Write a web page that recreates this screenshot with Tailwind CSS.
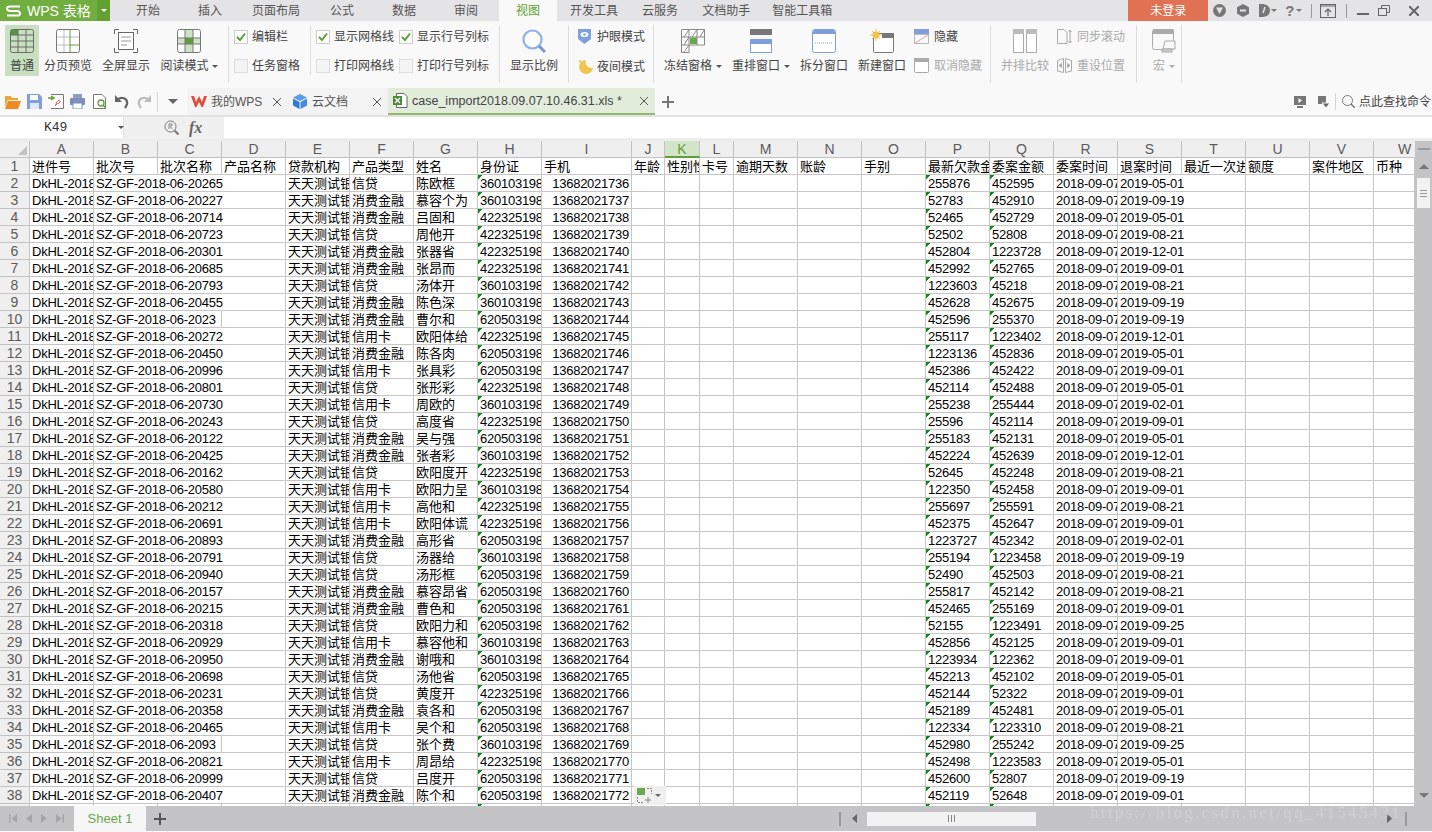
<!DOCTYPE html>
<html lang="zh-CN">
<head>
  <meta charset="UTF-8">
  <title>WPS 表格 - case_import2018.09.07.10.46.31.xls</title>
  <script src="https://cdn.jsdelivr.net/npm/@tailwindcss/browser@4"></script>
</head>
<body class="relative w-[1432px] h-[832px] overflow-hidden bg-[#f9f9f9] text-[12px] leading-[14px] text-[#444] [font-family:'Liberation_Sans','Noto_Sans_CJK_SC',sans-serif]">

  <!-- Title bar -->
  <header class="flex h-[21px] bg-[#e4e4e6]">
    <div class="flex items-center w-[97px] bg-[#72ad3f] text-white">
      <svg class="ml-[6px] w-[15px] h-[12px]" viewBox="0 0 15 12" fill="none" stroke="#fff" stroke-width="2"><path d="M14 1.500H4Q1 1.500 1 3.500T4 6H11Q14 6 14 8.500T11 10.500H1"/></svg>
      <span class="ml-[6px] text-[14px]">WPS 表格</span>
    </div>
    <div class="flex items-center justify-center w-[13px] bg-[#62a032]">
      <div class="w-0 h-0 border-x-[3px] border-x-transparent border-t-[3px] border-t-white"></div>
    </div>
    <nav class="flex items-center text-[#555]">
      <span class="ml-[26px]">开始</span>
      <span class="ml-[38px]">插入</span>
      <span class="ml-[30px]">页面布局</span>
      <span class="ml-[30px]">公式</span>
      <span class="ml-[38px]">数据</span>
      <span class="ml-[38px]">审阅</span>
      <span class="ml-[21px] flex items-center justify-center w-[58px] h-[21px] bg-[#f9f9f9] text-[#5d9e32]">视图</span>
      <span class="ml-[13px]">开发工具</span>
      <span class="ml-[24px]">云服务</span>
      <span class="ml-[24px]">文档助手</span>
      <span class="ml-[22px]">智能工具箱</span>
    </nav>
    <div class="flex items-center justify-center ml-[296px] w-[80px] bg-[#e07152] text-white">未登录</div>
    <div class="flex items-center flex-1 text-[#777]">
      <svg class="ml-[5px] w-[13px] h-[13px]" viewBox="0 0 13 13"><circle cx="6.500" cy="6.500" r="6.500" fill="#777"/><path d="M3 3.500H10L6.500 10Z" fill="#e4e4e6"/></svg>
      <svg class="ml-[11px] w-[12px] h-[13px]" viewBox="0 0 12 13"><path d="M6 0L12 3.200V9.800L6 13L0 9.800V3.200Z" fill="#777"/><path d="M3 6.500H9" stroke="#e4e4e6" stroke-width="2"/></svg>
      <svg class="ml-[10px] w-[11px] h-[13px]" viewBox="0 0 11 13"><path d="M0 0H4Q11 1 11 6.500T4 13H0Z" fill="#777"/><path d="M6 3L4 9" stroke="#e4e4e6" stroke-width="1.500"/></svg>
      <div class="ml-[1px] w-0 h-0 border-x-[3px] border-x-transparent border-t-[3px] border-t-[#777]"></div>
      <span class="ml-[8px] text-[15px] font-bold">?</span>
      <div class="ml-[2px] w-0 h-0 border-x-[3px] border-x-transparent border-t-[3px] border-t-[#777]"></div>
      <div class="ml-[9px] w-px h-[14px] bg-[#9a9a9a]"></div>
      <svg class="ml-[8px] w-[16px] h-[14px]" viewBox="0 0 16 14" fill="none" stroke="#666"><rect x=".5" y=".5" width="15" height="13"/><path d="M0 2H16M8 12V5M5 8L8 5L11 8" stroke-width="1.200"/></svg>
      <div class="ml-[10px] w-px h-[14px] bg-[#9a9a9a]"></div>
      <div class="ml-[10px] w-[12px] h-[2px] bg-[#666] mt-[6px]"></div>
      <svg class="ml-[9px] w-[12px] h-[11px]" viewBox="0 0 12 11" fill="none" stroke="#666"><rect x=".5" y="3.500" width="8" height="7"/><path d="M3.500 3V.5H11.500V7.500H9"/></svg>
      <svg class="ml-[19px] w-[10px] h-[10px]" viewBox="0 0 10 10" fill="none" stroke="#666" stroke-width="2"><path d="M0 0L10 10M10 0L0 10"/></svg>
    </div>
  </header>

  <!-- Ribbon -->
  <section class="flex items-start h-[67px] pl-[5px] pt-[4px]">
    <div class="flex flex-col items-center w-[34px] h-[51px] pt-[4px] bg-[#c8e0bf]">
      <svg class="w-6 h-6" viewBox="0 0 24 24" fill="none" stroke="#6b6b6b"><rect x=".5" y=".5" width="23" height="23" rx="2" fill="#c8e0bf"/><rect x="1" y="1" width="7" height="5" fill="#4f9a3e" stroke="none"/><path d="M8 1V23M16 1V23M1 6H23M1 12H23M1 18H23"/></svg>
      <span class="mt-[6px]">普通</span>
    </div>
    <div class="flex flex-col items-center ml-[5px] w-[48px] pt-[4px]">
      <svg class="w-6 h-6" viewBox="0 0 24 24" fill="none" stroke="#bbb"><rect x=".5" y=".5" width="23" height="23" rx="2" fill="#fff" stroke="#777"/><path d="M8 1V23M1 8H23M1 16H14"/><path d="M14 1V23M14 16H23" stroke="#5f9f3a"/></svg>
      <span class="mt-[6px]">分页预览</span>
    </div>
    <div class="flex flex-col items-center ml-[10px] w-[48px] pt-[4px]">
      <svg class="w-6 h-6" viewBox="0 0 24 24" fill="none" stroke="#666"><path d="M.5 5V.5H5M19 .5H23.500V5M.5 19V23.500H5M19 23.500H23.500V19"/><rect x="4.500" y="3.500" width="15" height="17" fill="#fff"/><path d="M7 8H17M7 12H17M7 16H13" stroke="#999"/></svg>
      <span class="mt-[6px]">全屏显示</span>
    </div>
    <div class="flex flex-col items-center ml-[10px] w-[58px] pt-[4px]">
      <svg class="w-6 h-6" viewBox="0 0 24 24" fill="none" stroke="#777"><rect x=".5" y=".5" width="23" height="23" rx="2" fill="#fff"/><rect x="1" y="9" width="22" height="6" fill="#cfe2c6" stroke="none"/><rect x="8" y="1" width="8" height="22" fill="#cfe2c6" stroke="none"/><rect x="8" y="9" width="8" height="6" fill="#5f9f3a" stroke="none"/><path d="M8 1V23M16 1V23M1 9H23M1 15H23"/></svg>
      <div class="flex items-center mt-[6px]">阅读模式<i class="ml-[3px] w-0 h-0 border-x-[3px] border-x-transparent border-t-[3px] border-t-[#555]"></i></div>
    </div>
    <div class="ml-[10px] w-px h-[58px] bg-[#dcdcdc]"></div>

    <div class="flex flex-col gap-[15px] ml-[5px] pt-[5px] w-[76px]">
      <label class="flex items-center h-[14px]"><span class="flex items-center justify-center w-[14px] h-[14px] border border-[#ccc] bg-white"><svg class="w-[10px] h-[10px]" viewBox="0 0 10 10" fill="none" stroke="#5f9f3a" stroke-width="2"><path d="M1 5L4 8L9 1.500"/></svg></span><span class="ml-[4px]">编辑栏</span></label>
      <label class="flex items-center h-[14px]"><span class="w-[14px] h-[14px] border border-[#ddd] bg-[#f4f4f4]"></span><span class="ml-[4px]">任务窗格</span></label>
    </div>
    <div class="w-px h-[50px] bg-[#dcdcdc]"></div>

    <div class="grid grid-cols-[83px_90px] gap-y-[15px] ml-[5px] pt-[5px] w-[183px]">
      <label class="flex items-center h-[14px]"><span class="flex items-center justify-center w-[14px] h-[14px] border border-[#ccc] bg-white"><svg class="w-[10px] h-[10px]" viewBox="0 0 10 10" fill="none" stroke="#5f9f3a" stroke-width="2"><path d="M1 5L4 8L9 1.500"/></svg></span><span class="ml-[4px]">显示网格线</span></label>
      <label class="flex items-center h-[14px]"><span class="flex items-center justify-center w-[14px] h-[14px] border border-[#ccc] bg-white"><svg class="w-[10px] h-[10px]" viewBox="0 0 10 10" fill="none" stroke="#5f9f3a" stroke-width="2"><path d="M1 5L4 8L9 1.500"/></svg></span><span class="ml-[4px]">显示行号列标</span></label>
      <label class="flex items-center h-[14px]"><span class="w-[14px] h-[14px] border border-[#ddd] bg-[#f4f4f4]"></span><span class="ml-[4px]">打印网格线</span></label>
      <label class="flex items-center h-[14px]"><span class="w-[14px] h-[14px] border border-[#ddd] bg-[#f4f4f4]"></span><span class="ml-[4px]">打印行号列标</span></label>
    </div>
    <div class="w-px h-[58px] bg-[#dcdcdc]"></div>

    <div class="flex flex-col items-center ml-[10px] w-[48px] pt-[4px]">
      <svg class="w-6 h-6" viewBox="0 0 24 24" fill="none"><circle cx="10.500" cy="10.500" r="9" stroke="#8fb0ec" stroke-width="2.200" fill="#fff"/><path d="M17 17L23 23" stroke="#7f97c6" stroke-width="3"/></svg>
      <span class="mt-[6px]">显示比例</span>
    </div>
    <div class="ml-[10px] w-px h-[58px] bg-[#dcdcdc]"></div>

    <div class="flex flex-col gap-[15px] ml-[9px] pt-[4px] w-[75px]">
      <div class="flex items-center h-[15px]"><svg class="w-[13px] h-[15px]" viewBox="0 0 13 15"><path d="M0 0H13V10L6.500 15L0 10Z" fill="#7e9fdc"/><ellipse cx="6.500" cy="5.500" rx="4" ry="2.500" fill="#fff"/><circle cx="6.500" cy="5.500" r="1.300" fill="#7e9fdc"/></svg><span class="ml-[6px]">护眼模式</span></div>
      <div class="flex items-center h-[15px]"><svg class="w-[15px] h-[15px]" viewBox="0 0 15 15"><path d="M8 1A7 7 0 1 0 15 9A6 6 0 0 1 8 1Z" fill="#f3c34f"/><path d="M2 1V4M.5 2.500H3.500" stroke="#f3c34f"/></svg><span class="ml-[4px]">夜间模式</span></div>
    </div>
    <div class="w-px h-[58px] bg-[#dcdcdc]"></div>

    <div class="flex flex-col items-center ml-[10px] w-[58px] pt-[4px]">
      <svg class="w-6 h-6" viewBox="0 0 24 24" fill="none" stroke="#888"><path d="M.5 23.500V.5H23.500V16H8V23.500Z" fill="#fff"/><path d="M.5 8H23.500M8 .5V16M16 .5V16M.5 16H8M3 8L8 .5M11 8L16 .5M19 8L23.500 .5M3 16L8 8M3 23L8 16"/><rect x="9" y="8.500" width="7" height="6.500" fill="#6ba84e" stroke="none"/></svg>
      <div class="flex items-center mt-[6px]">冻结窗格<i class="ml-[4px] w-0 h-0 border-x-[3px] border-x-transparent border-t-[3px] border-t-[#555]"></i></div>
    </div>
    <div class="flex flex-col items-center ml-[10px] w-[58px] pt-[4px]">
      <svg class="w-6 h-6" viewBox="0 0 24 24"><rect x="1" y="0" width="22" height="6" fill="#777"/><rect x="1" y="6" width="22" height="3" fill="#f9f9f9"/><rect x="1.500" y="10.500" width="21" height="13" fill="#fff" stroke="#7e9fdc"/><rect x="1" y="10" width="22" height="5" fill="#7e9fdc"/></svg>
      <div class="flex items-center mt-[6px]">重排窗口<i class="ml-[4px] w-0 h-0 border-x-[3px] border-x-transparent border-t-[3px] border-t-[#555]"></i></div>
    </div>
    <div class="flex flex-col items-center ml-[10px] w-[48px] pt-[4px]">
      <svg class="w-6 h-6" viewBox="0 0 24 24"><rect x=".5" y=".5" width="23" height="23" rx="2" fill="#fff" stroke="#7e9fdc"/><path d="M1 3Q1 1 3 1H21Q23 1 23 3V5H1Z" fill="#7e9fdc"/><path d="M3 14H21" stroke="#7e9fdc" stroke-dasharray="1 1"/></svg>
      <span class="mt-[6px]">拆分窗口</span>
    </div>
    <div class="flex flex-col items-center ml-[10px] w-[48px] pt-[4px]">
      <svg class="w-6 h-6" viewBox="0 0 24 24"><rect x="3.500" y="4.500" width="20" height="19" rx="1" fill="#fff" stroke="#777"/><rect x="12" y="4" width="12" height="5" fill="#777"/><circle cx="6" cy="6" r="3.500" fill="#f3c34f"/><path d="M6 0V12M0 6H12M2 2L10 10M10 2L2 10" stroke="#f3c34f"/></svg>
      <span class="mt-[6px]">新建窗口</span>
    </div>
    <div class="flex flex-col gap-[14px] ml-[8px] pt-[4px] w-[76px]">
      <div class="flex items-center h-[15px]"><svg class="w-[15px] h-[15px]" viewBox="0 0 15 15" fill="none"><rect width="15" height="5" fill="#7e9fdc"/><rect x=".5" y="5.500" width="14" height="9" stroke="#777" stroke-dasharray="1 1"/><path d="M1 14L14 6" stroke="#ee9aa8"/></svg><span class="ml-[5px]">隐藏</span></div>
      <div class="flex items-center h-[15px] text-[#aaa]"><svg class="w-[15px] h-[15px]" viewBox="0 0 15 15"><rect x=".5" y=".5" width="14" height="14" rx="1" fill="#fff" stroke="#aaa"/><rect width="15" height="4" fill="#aaa"/></svg><span class="ml-[5px]">取消隐藏</span></div>
    </div>
    <div class="w-px h-[58px] bg-[#dcdcdc]"></div>

    <div class="flex flex-col items-center ml-[10px] w-[48px] pt-[4px] text-[#aaa]">
      <svg class="w-6 h-6" viewBox="0 0 24 24" fill="#fff" stroke="#aaa"><rect x=".5" y=".5" width="10" height="23"/><rect x="13.500" y=".5" width="10" height="23"/><path d="M0 0H11V5H0ZM13 0H24V5H13Z" fill="#bbb" stroke="none"/></svg>
      <span class="mt-[6px]">并排比较</span>
    </div>
    <div class="flex flex-col gap-[14px] ml-[8px] pt-[4px] w-[79px] text-[#aaa]">
      <div class="flex items-center h-[15px]"><svg class="w-[15px] h-[15px]" viewBox="0 0 15 15" fill="none" stroke="#aaa"><path d="M.5 .5H7L10 3.500V14.500H.5Z"/><path d="M13 1V14M11.500 3L13 1L14.500 3M11.500 12L13 14L14.500 12"/></svg><span class="ml-[5px]">同步滚动</span></div>
      <div class="flex items-center h-[15px]"><svg class="w-[15px] h-[15px]" viewBox="0 0 15 15" fill="none" stroke="#aaa"><path d="M.5 2.500L6.500 .5V14.500L.5 13ZM14.500 2.500L8.500 .5V14.500L14.500 13Z"/><path d="M2 7.500L4.500 5.500V9.500ZM13 7.500L10.500 5.500V9.500Z" fill="#aaa"/></svg><span class="ml-[5px]">重设位置</span></div>
    </div>
    <div class="w-px h-[58px] bg-[#dcdcdc]"></div>

    <div class="flex flex-col items-center ml-[10px] w-[34px] pt-[4px] text-[#aaa]">
      <svg class="w-6 h-6" viewBox="0 0 24 24" fill="#f9f9f9" stroke="#aaa"><rect x=".5" y=".5" width="21" height="20" rx="2"/><path d="M1 2Q1 0 3 0H20Q22 0 22 2V5H1Z" fill="#aaa" stroke="none"/><path d="M13 12H23V20H11Z"/><path d="M10 23H20V20H10Z" fill="#ccc"/></svg>
      <div class="flex items-center mt-[6px]">宏<i class="ml-[4px] w-0 h-0 border-x-[3px] border-x-transparent border-t-[3px] border-t-[#aaa]"></i></div>
    </div>
    <div class="w-px h-[58px] bg-[#dcdcdc]"></div>
  </section>

  <!-- Quick access + document tabs -->
  <section class="flex items-stretch h-[27px]">
    <div class="flex items-center w-[187px] pl-[5px]">
      <svg class="w-[16px] h-[14px]" viewBox="0 0 16 14"><path d="M0 1H6L7 3H13V5H3L0 12Z" fill="#f0a23c"/><path d="M3 6H16L13 14H0Z" fill="#f08a1e"/></svg>
      <svg class="ml-[6px] w-[15px] h-[15px]" viewBox="0 0 15 15"><path d="M0 0H12L15 3V15H0Z" fill="#7e9fdc"/><rect x="3" y="1" width="8" height="5" fill="#fff"/><rect x="3" y="9" width="9" height="6" fill="#dfe8f8"/></svg>
      <svg class="ml-[6px] w-[16px] h-[15px]" viewBox="0 0 16 15" fill="none"><path d="M3 .5H15.500V14.500H3" stroke="#777" fill="#fff"/><path d="M0 4H5M3 2L6 4L3 6" stroke="#5f9f3a" stroke-width="1.500"/><path d="M8 11C8 6 13 5 12 8C11 10 8 9 7 12" stroke="#d9534f"/></svg>
      <svg class="ml-[6px] w-[15px] h-[15px]" viewBox="0 0 15 15"><rect x="3" y="0" width="9" height="4" fill="#8f9fc4"/><rect x="0" y="4" width="15" height="7" rx="1" fill="#7e8fb8"/><rect x="3" y="9" width="9" height="6" fill="#fff" stroke="#7e8fb8"/></svg>
      <svg class="ml-[8px] w-[14px] h-[15px]" viewBox="0 0 14 15" fill="none"><path d="M.5 .5H9L12.500 4V14.500H.5Z" stroke="#777" fill="#fff"/><circle cx="8" cy="9" r="3" stroke="#5f9f3a" stroke-width="1.300"/><path d="M10 11L13 14" stroke="#5f9f3a" stroke-width="1.500"/></svg>
      <svg class="ml-[8px] w-[14px] h-[14px]" viewBox="0 0 14 14" fill="none"><path d="M2 5C6 1 13 3 12 9Q11.500 11 10 13" stroke="#666" stroke-width="2.300"/><path d="M0 0V7H7Z" fill="#666"/></svg>
      <svg class="ml-[8px] w-[14px] h-[14px]" viewBox="0 0 14 14" fill="none"><path d="M12 5C8 1 1 3 2 9Q2.500 11 4 13" stroke="#bbb" stroke-width="2.300"/><path d="M14 0V7H7Z" fill="#bbb"/></svg>
      <div class="ml-[6px] w-px h-[20px] bg-[#d5d5d5]"></div>
      <div class="ml-[10px] w-0 h-0 border-x-[5px] border-x-transparent border-t-[5px] border-t-[#666]"></div>
    </div>
    <div class="flex items-center w-[100px] bg-[#f3f3f3] text-[#555]">
      <svg class="ml-[4px] w-[16px] h-[11px]" viewBox="0 0 16 11"><path d="M0 0H3L5 6L8 0L11 6L13 0H16L12 11H10.500L8 6L5.500 11H4Z" fill="#e24b3b"/></svg>
      <span class="ml-[4px] w-[62px]">我的WPS</span>
      <svg class="w-[8px] h-[8px]" viewBox="0 0 8 8" stroke="#555"><path d="M0 0L8 8M8 0L0 8"/></svg>
    </div>
    <div class="flex items-center w-[101px] bg-[#f3f3f3] text-[#555]">
      <svg class="ml-[6px] w-[14px] h-[15px]" viewBox="0 0 14 15"><path d="M7 0L14 3.500L7 7L0 3.500Z" fill="#5a9be6"/><path d="M0 4.500L6.500 8V15L0 11.500Z" fill="#2f7bd8"/><path d="M14 4.500L7.500 8V15L14 11.500Z" fill="#3f8be0"/></svg>
      <span class="ml-[5px] w-[61px]">云文档</span>
      <svg class="w-[8px] h-[8px]" viewBox="0 0 8 8" stroke="#555"><path d="M0 0L8 8M8 0L0 8"/></svg>
    </div>
    <div class="flex items-center w-[267px] bg-[#e2ecdb] border-b-[2px] border-b-[#8fbc6f] text-[#444] text-[12.5px]">
      <svg class="ml-[5px] w-[15px] h-[15px]" viewBox="0 0 15 15" fill="none"><path d="M3.500 .5H11L14 3.500V14.500H3.500Z" stroke="#666" fill="#fff"/><rect x="0" y="3" width="9" height="9" fill="#4c8a3a"/><path d="M2 5L7 10M7 5L2 10" stroke="#fff" stroke-width="1.300"/></svg>
      <span class="ml-[4px] w-[228px]">case_import2018.09.07.10.46.31.xls *</span>
      <svg class="w-[8px] h-[8px]" viewBox="0 0 8 8" stroke="#555"><path d="M0 0L8 8M8 0L0 8"/></svg>
    </div>
    <svg class="ml-[7px] self-center w-[12px] h-[12px]" viewBox="0 0 12 12" stroke="#777" stroke-width="2"><path d="M6 0V12M0 6H12"/></svg>
    <div class="flex items-center ml-auto">
      <svg class="w-[12px] h-[12px]" viewBox="0 0 12 12"><rect y="0" width="12" height="9" fill="#777"/><path d="M4.500 2V7L8 4.500Z" fill="#fff"/><rect x="3" y="10" width="6" height="2" fill="#777"/></svg>
      <svg class="ml-[12px] w-[12px] h-[12px]" viewBox="0 0 12 12"><rect width="8" height="8" fill="#777"/><path d="M4 7H12L8 12Z" fill="#666" stroke="#f9f9f9"/></svg>
      <div class="ml-[5px] w-px h-[17px] bg-[#d5d5d5]"></div>
      <svg class="ml-[6px] w-[13px] h-[13px]" viewBox="0 0 13 13" fill="none" stroke="#777"><circle cx="5.500" cy="5.500" r="5"/><path d="M9 9L13 13" stroke-width="1.500"/></svg>
      <span class="ml-[4px] w-[73px] whitespace-nowrap overflow-hidden">点此查找命令</span>
    </div>
  </section>

  <div class="h-[2px] bg-[#e2e2e2]"></div>

  <!-- Formula bar -->
  <section class="flex h-[22px] pb-px bg-[#f0f0f0]">
    <div class="flex items-center w-[124px] bg-white border-r border-[#e2e2e2] [font-family:'Liberation_Mono',monospace] text-[13px] text-[#333]">
      <span class="ml-[44px]">K49</span>
      <i class="ml-[51px] w-0 h-0 border-x-[3px] border-x-transparent border-t-[3px] border-t-[#555]"></i>
    </div>
    <div class="flex items-center w-[100px] text-[#666]">
      <svg class="ml-[40px] w-[15px] h-[15px]" viewBox="0 0 15 15" fill="none" stroke="#777"><circle cx="6.500" cy="6.500" r="5.500"/><path d="M10.500 10.500L14.500 14.500" stroke-width="2"/><path d="M5 9V4H8Q9 6 6 6.500L8.500 9" stroke-width=".9"/></svg>
      <span class="ml-[10px] [font-family:'Liberation_Serif',serif] italic font-bold text-[16px]">fx</span>
    </div>
    <div class="flex-1 bg-white"></div>
  </section>

  <!-- Sheet -->
  <main class="flex h-[667px] pt-[2px] bg-[#ececec]">
    <div id="sheet" class="grid grid-cols-[30px_repeat(8,64px)_90px_33px_35px_34px_repeat(10,64px)_41px] auto-rows-[17px] w-[1415px] h-[665px] overflow-hidden bg-white"></div>
    <aside class="flex flex-col items-center w-[17px] h-[665px] bg-[#c4c4c6]">
      <div class="mt-[7px] w-[12px] h-[2px] bg-[#9a9a9a]"></div>
      <div class="mt-[14px] w-0 h-0 border-x-[5px] border-x-transparent border-b-[5px] border-b-[#777]"></div>
      <div class="flex flex-col items-center justify-center gap-[2px] mt-[9px] w-[13px] h-[30px] bg-[#f2f2f2]">
        <i class="w-[7px] h-px bg-[#999]"></i><i class="w-[7px] h-px bg-[#999]"></i><i class="w-[7px] h-px bg-[#999]"></i>
      </div>
      <div class="mt-auto mb-[8px] w-0 h-0 border-x-[5px] border-x-transparent border-t-[5px] border-t-[#777]"></div>
    </aside>
  </main>

  <!-- Sheet tabs + horizontal scrollbar -->
  <footer class="flex items-stretch h-[25px] bg-[#c4c4c6]">
    <div class="flex items-center w-[74px] pl-[9px] gap-[9px]">
      <svg class="w-[8px] h-[9px]" viewBox="0 0 8 9" fill="#a6a6a6"><path d="M0 0H1.500V9H0ZM8 0V9L2.500 4.500Z"/></svg>
      <svg class="w-[6px] h-[9px]" viewBox="0 0 6 9" fill="#a6a6a6"><path d="M6 0V9L0 4.500Z"/></svg>
      <svg class="w-[6px] h-[9px]" viewBox="0 0 6 9" fill="#a6a6a6"><path d="M0 0V9L6 4.500Z"/></svg>
      <svg class="w-[8px] h-[9px]" viewBox="0 0 8 9" fill="#a6a6a6"><path d="M6.500 0H8V9H6.500ZM0 0V9L5.500 4.500Z"/></svg>
    </div>
    <div class="flex items-center justify-center w-[72px] bg-[#f6f6f6] text-[13px] text-[#6aa84f]">Sheet 1</div>
    <svg class="ml-[8px] self-center w-[12px] h-[12px]" viewBox="0 0 12 12" stroke="#555" stroke-width="2"><path d="M6 0V12M0 6H12"/></svg>
    <div class="ml-[673px] self-center w-[2px] h-[14px] bg-[#999]"></div>
    <svg class="ml-[11px] self-center w-[5px] h-[9px]" viewBox="0 0 5 9" fill="#666"><path d="M5 0V9L0 4.500Z"/></svg>
    <div class="flex items-center justify-center gap-[2px] ml-[10px] self-center w-[169px] h-[14px] bg-[#f2f2f2]">
      <i class="w-px h-[7px] bg-[#888]"></i><i class="w-px h-[7px] bg-[#888]"></i><i class="w-px h-[7px] bg-[#888]"></i>
    </div>
    <svg class="ml-[351px] self-center w-[5px] h-[9px]" viewBox="0 0 5 9" fill="#666"><path d="M0 0V9L5 4.500Z"/></svg>
    <div class="ml-[13px] self-center w-[2px] h-[14px] bg-[#999]"></div>
  </footer>

  <!-- Paste options button floating over the grid -->
  <div class="absolute left-[634px] top-[786px] flex items-center w-[32px] h-[19px] pl-[3px] bg-[#efefef]">
    <svg class="w-[15px] h-[15px]" viewBox="0 0 15 15" fill="none"><rect width="8" height="7" fill="#6ba84e"/><path d="M10 .5H14.500V6M.5 9V14.500H6" stroke="#888" stroke-dasharray="2 1"/><path d="M11 9V15M8 12H14" stroke="#888"/></svg>
    <i class="ml-[3px] w-0 h-0 border-x-[3px] border-x-transparent border-t-[3px] border-t-[#666]"></i>
  </div>

  <!-- Watermark -->
  <div class="absolute left-[1090px] top-[801px] text-[17px] leading-[24px] tracking-[2.300px] text-white/20 [font-family:'Liberation_Serif',serif] whitespace-nowrap">https://blog.csdn.net/qq_41545431</div>

  <script>
    const headers = ['进件号','批次号','批次名称','产品名称','贷款机构','产品类型','姓名','身份证','手机','年龄','性别性质','卡号','逾期天数','账龄','手别','最新欠款金额','委案金额','委案时间','退案时间','最近一次进展','额度','案件地区','币种'];
    const letters = 'ABCDEFGHIJKLMNOPQRSTUVW'.split('');
    const ids = { 3: '360103198501', 4: '422325198602', 6: '620503198703' };
    // batch suffix, type, name, id prefix, latest arrears, case amount, withdrawal date
    const data = [
      '20265 信贷 陈欧框 3 255876 452595 2019-05-01',
      '20227 消费金融 慕容个为 3 52783 452910 2019-09-19',
      '20714 消费金融 吕固和 4 52465 452729 2019-05-01',
      '20723 信贷 周他开 4 52502 52808 2019-08-21',
      '20301 消费金融 张器省 4 452804 1223728 2019-12-01',
      '20685 消费金融 张昂而 4 452992 452765 2019-09-01',
      '20793 信贷 汤体开 3 1223603 45218 2019-08-21',
      '20455 消费金融 陈色深 3 452628 452675 2019-09-19',
      '2023 消费金融 曹尔和 6 452596 255370 2019-09-19',
      '20272 信用卡 欧阳体给 4 255117 1223402 2019-12-01',
      '20450 消费金融 陈各肉 6 1223136 452836 2019-05-01',
      '20996 信用卡 张具彩 6 452386 452422 2019-09-01',
      '20801 信贷 张形彩 4 452114 452488 2019-05-01',
      '20730 信用卡 周欧的 3 255238 255444 2019-02-01',
      '20243 信贷 高度省 4 25596 452114 2019-09-01',
      '20122 消费金融 吴与强 6 255183 452131 2019-05-01',
      '20425 消费金融 张者彩 3 452224 452639 2019-12-01',
      '20162 信贷 欧阳度开 4 52645 452248 2019-08-21',
      '20580 信用卡 欧阳力呈 3 122350 452458 2019-09-01',
      '20212 信用卡 高他和 4 255697 255591 2019-08-21',
      '20691 信用卡 欧阳体谎 4 452375 452647 2019-09-01',
      '20893 消费金融 高形省 6 1223727 452342 2019-02-01',
      '20791 信贷 汤器给 3 255194 1223458 2019-09-19',
      '20940 信贷 汤形框 6 52490 452503 2019-08-21',
      '20157 消费金融 慕容昂省 6 255817 452142 2019-08-21',
      '20215 消费金融 曹色和 6 452465 255169 2019-09-01',
      '20318 信贷 欧阳力和 6 52155 1223491 2019-09-25',
      '20929 信用卡 慕容他和 3 452856 452125 2019-09-01',
      '20950 消费金融 谢哦和 3 1223934 122362 2019-09-01',
      '20698 信贷 汤他省 6 452213 452102 2019-05-01',
      '20231 信贷 黄度开 4 452144 52322 2019-09-01',
      '20358 消费金融 袁各和 6 452189 452481 2019-05-01',
      '20465 信用卡 吴个和 6 122334 1223310 2019-08-21',
      '2093 信贷 张个费 3 452980 255242 2019-09-25',
      '20821 信用卡 周昂给 4 452498 1223583 2019-05-01',
      '20999 信贷 吕度开 6 452600 52807 2019-09-19',
      '20407 消费金融 陈个和 6 452119 52648 2019-09-01'
    ];

    const headCls = 'flex items-center justify-center border-r border-b border-[#c2c2c2] bg-[#efefef] text-[14px] text-[#5b5b5b]';
    const lastHeadCls = 'flex items-center pl-[24px] border-b border-[#c2c2c2] bg-[#efefef] text-[14px] text-[#5b5b5b]';
    const activeCls = 'flex items-center justify-center border-r border-b-[2px] border-r-[#c2c2c2] border-b-[#5f9f3a] bg-[#d3e4ca] text-[14px] text-[#5f9f3a]';
    const cellCls = 'border-r border-b border-[#c6c6c6] pl-[2px] overflow-hidden whitespace-nowrap text-[13px] leading-[17px] text-black';
    const numCls = cellCls + ' tracking-[-0.25px]';
    const markCls = numCls + ' bg-[linear-gradient(135deg,#0f8a1f_3.500px,transparent_3.500px)]';
    const rightCls = 'border-r border-b border-[#c6c6c6] pr-[2px] overflow-hidden whitespace-nowrap text-right text-[13px] leading-[17px] tracking-[-0.25px] text-black';

    const cell = (text, cls) => `<div class="${cls}">${text}</div>`;
    const blank = (n) => cell('', cellCls).repeat(n);

    let html = `<div class="flex items-end justify-end pr-[2px] pb-[2px] border-r border-b border-[#c2c2c2] bg-[#efefef]"><div class="w-0 h-0 border-l-[9px] border-l-transparent border-b-[9px] border-b-[#c0c0c0]"></div></div>`;
    letters.forEach(l => { html += cell(l, l === 'K' ? activeCls : l === 'W' ? lastHeadCls : headCls); });
    html += cell('1', headCls);
    headers.forEach(h => { html += cell(h, cellCls); });

    data.forEach((line, i) => {
      const [batch, type, name, id, arrears, amount, back] = line.split(' ');
      html += cell(i + 2, headCls);
      html += cell('DkHL-20180907', numCls);
      if (batch.length === 4) {
        html += `<div class="col-span-2 ${numCls}">SZ-GF-2018-06-${batch}</div>` + blank(1);
      } else {
        html += `<div class="col-span-3 ${numCls}">SZ-GF-2018-06-${batch}</div>`;
      }
      html += cell('天天测试银行', cellCls) + cell(type, cellCls) + cell(name, cellCls);
      html += cell(ids[id], markCls) + cell(13682021736 + i, rightCls);
      html += blank(6);
      html += cell(arrears, markCls) + cell(amount, markCls);
      // the date spills over the empty column T
      html += cell('2018-09-07', numCls) + `<div class="col-span-2 ${numCls}">${back}</div>`;
      html += blank(3);
    });

    // row 39 is cut off by the sheet tabs
    html += cell('39', headCls) + blank(7) + cell('', markCls) + blank(7) + cell('', markCls) + cell('', markCls) + blank(6);
    document.getElementById('sheet').innerHTML = html;
  </script>
</body>
</html>
